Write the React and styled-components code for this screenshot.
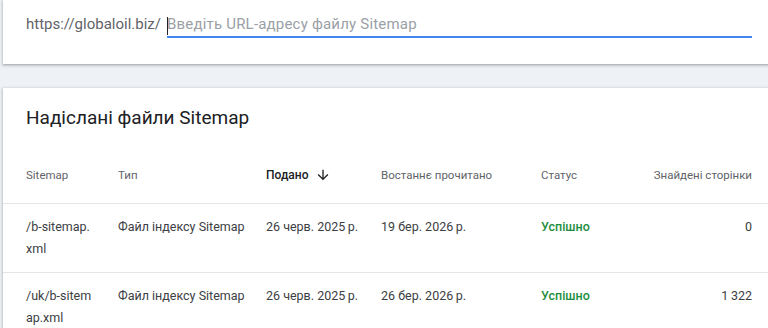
import React from "react";
import styled, { createGlobalStyle } from "styled-components";

const Global = createGlobalStyle`
  html, body { margin: 0; padding: 0; }
  body {
    background: #eef1f5;
    font-family: Roboto, "Noto Sans", Arial, sans-serif;
    overflow: hidden;
  }
`;

const Page = styled.div`
  width: 772px;
  padding-left: 3px;
  display: flex;
  flex-direction: column;
  gap: 24px;
`;

const Card = styled.section`
  background: #fff;
  box-shadow: 0 1px 2px rgba(60, 64, 67, 0.3), 0 1px 3px 1px rgba(60, 64, 67, 0.15);
`;

const InputCard = styled(Card)`
  height: 64px;
  box-sizing: border-box;
  padding: 12px 23px 0;
  display: flex;
  align-items: flex-start;
`;

const Prefix = styled.span`
  font-size: 15px;
  line-height: 24px;
  color: #5f6368;
  margin-right: 6px;
  white-space: nowrap;
`;

const InputWrap = styled.div`
  position: relative;
  flex: 1;
  display: flex;
`;

const UrlInput = styled.input`
  flex: 1;
  border: none;
  border-bottom: 2px solid #4285f4;
  outline: none;
  padding: 0 0 1px;
  height: 23px;
  font-family: inherit;
  font-size: 15px;
  color: #202124;
  background: transparent;
  &::placeholder {
    color: #9aa0a6;
    letter-spacing: 0.2px;
  }
`;

const Caret = styled.span`
  position: absolute;
  left: 0;
  top: 5px;
  width: 1px;
  height: 18px;
  background: #202124;
`;

const TableCard = styled(Card)`
  padding-top: 18px;
`;

const Title = styled.h2`
  margin: 0;
  padding: 0 23px;
  font-size: 19px;
  line-height: 24px;
  font-weight: 400;
  color: #202124;
`;

const Row = styled.div`
  display: grid;
  grid-template-columns: 92px 148px 115px 160px 1fr auto;
  padding: ${(p) => (p.$head ? "34px 23px 17px" : "12px 23px")};
  border-bottom: 1px solid #e3e5e8;
  font-size: ${(p) => (p.$head ? "11.5px" : "12.5px")};
  line-height: 22px;
  color: ${(p) => (p.$head ? "#5f6368" : "#3c4043")};
`;

const HeadCell = styled.div`
  display: flex;
  align-items: center;
  gap: 7px;
  color: ${(p) => (p.$active ? "#202124" : "inherit")};
  font-weight: ${(p) => (p.$active ? 500 : 400)};
  font-size: ${(p) => (p.$active ? "12px" : "inherit")};
  justify-content: ${(p) => (p.$right ? "flex-end" : "flex-start")};
`;

const Cell = styled.div`
  text-align: ${(p) => (p.$right ? "right" : "left")};
  color: ${(p) => (p.$ok ? "#1e8e3e" : "inherit")};
  font-weight: ${(p) => (p.$ok ? 500 : 400)};
`;

const ArrowDown = () => (
  <svg width="16" height="16" viewBox="0 0 24 24" fill="#202124">
    <path d="M20 12l-1.41-1.41L13 16.17V4h-2v12.17l-5.58-5.59L4 12l8 8 8-8z" />
  </svg>
);

const rows = [
  {
    map: ["/b-sitemap.", "xml"],
    type: "Файл індексу Sitemap",
    sent: "26 черв. 2025\u2009р.",
    read: "19 бер. 2026\u2009р.",
    status: "Успішно",
    found: "0",
  },
  {
    map: ["/uk/b-sitem", "ap.xml"],
    type: "Файл індексу Sitemap",
    sent: "26 черв. 2025\u2009р.",
    read: "26 бер. 2026\u2009р.",
    status: "Успішно",
    found: "1\u2009322",
  },
];

export default function App() {
  return (
    <>
      <Global />
      <Page>
        <InputCard>
          <Prefix>https://globaloil.biz/</Prefix>
          <InputWrap>
            <UrlInput placeholder="Введіть URL-адресу файлу Sitemap" />
            <Caret />
          </InputWrap>
        </InputCard>
        <TableCard>
          <Title>Надіслані файли Sitemap</Title>
          <Row $head>
            <HeadCell>Sitemap</HeadCell>
            <HeadCell>Тип</HeadCell>
            <HeadCell $active>
              Подано
              <ArrowDown />
            </HeadCell>
            <HeadCell>Востаннє прочитано</HeadCell>
            <HeadCell>Статус</HeadCell>
            <HeadCell $right>Знайдені сторінки</HeadCell>
          </Row>
          {rows.map((r, i) => (
            <Row key={i}>
              <Cell>
                {r.map[0]}
                <br />
                {r.map[1]}
              </Cell>
              <Cell>{r.type}</Cell>
              <Cell>{r.sent}</Cell>
              <Cell>{r.read}</Cell>
              <Cell $ok>{r.status}</Cell>
              <Cell $right>{r.found}</Cell>
            </Row>
          ))}
        </TableCard>
      </Page>
    </>
  );
}
